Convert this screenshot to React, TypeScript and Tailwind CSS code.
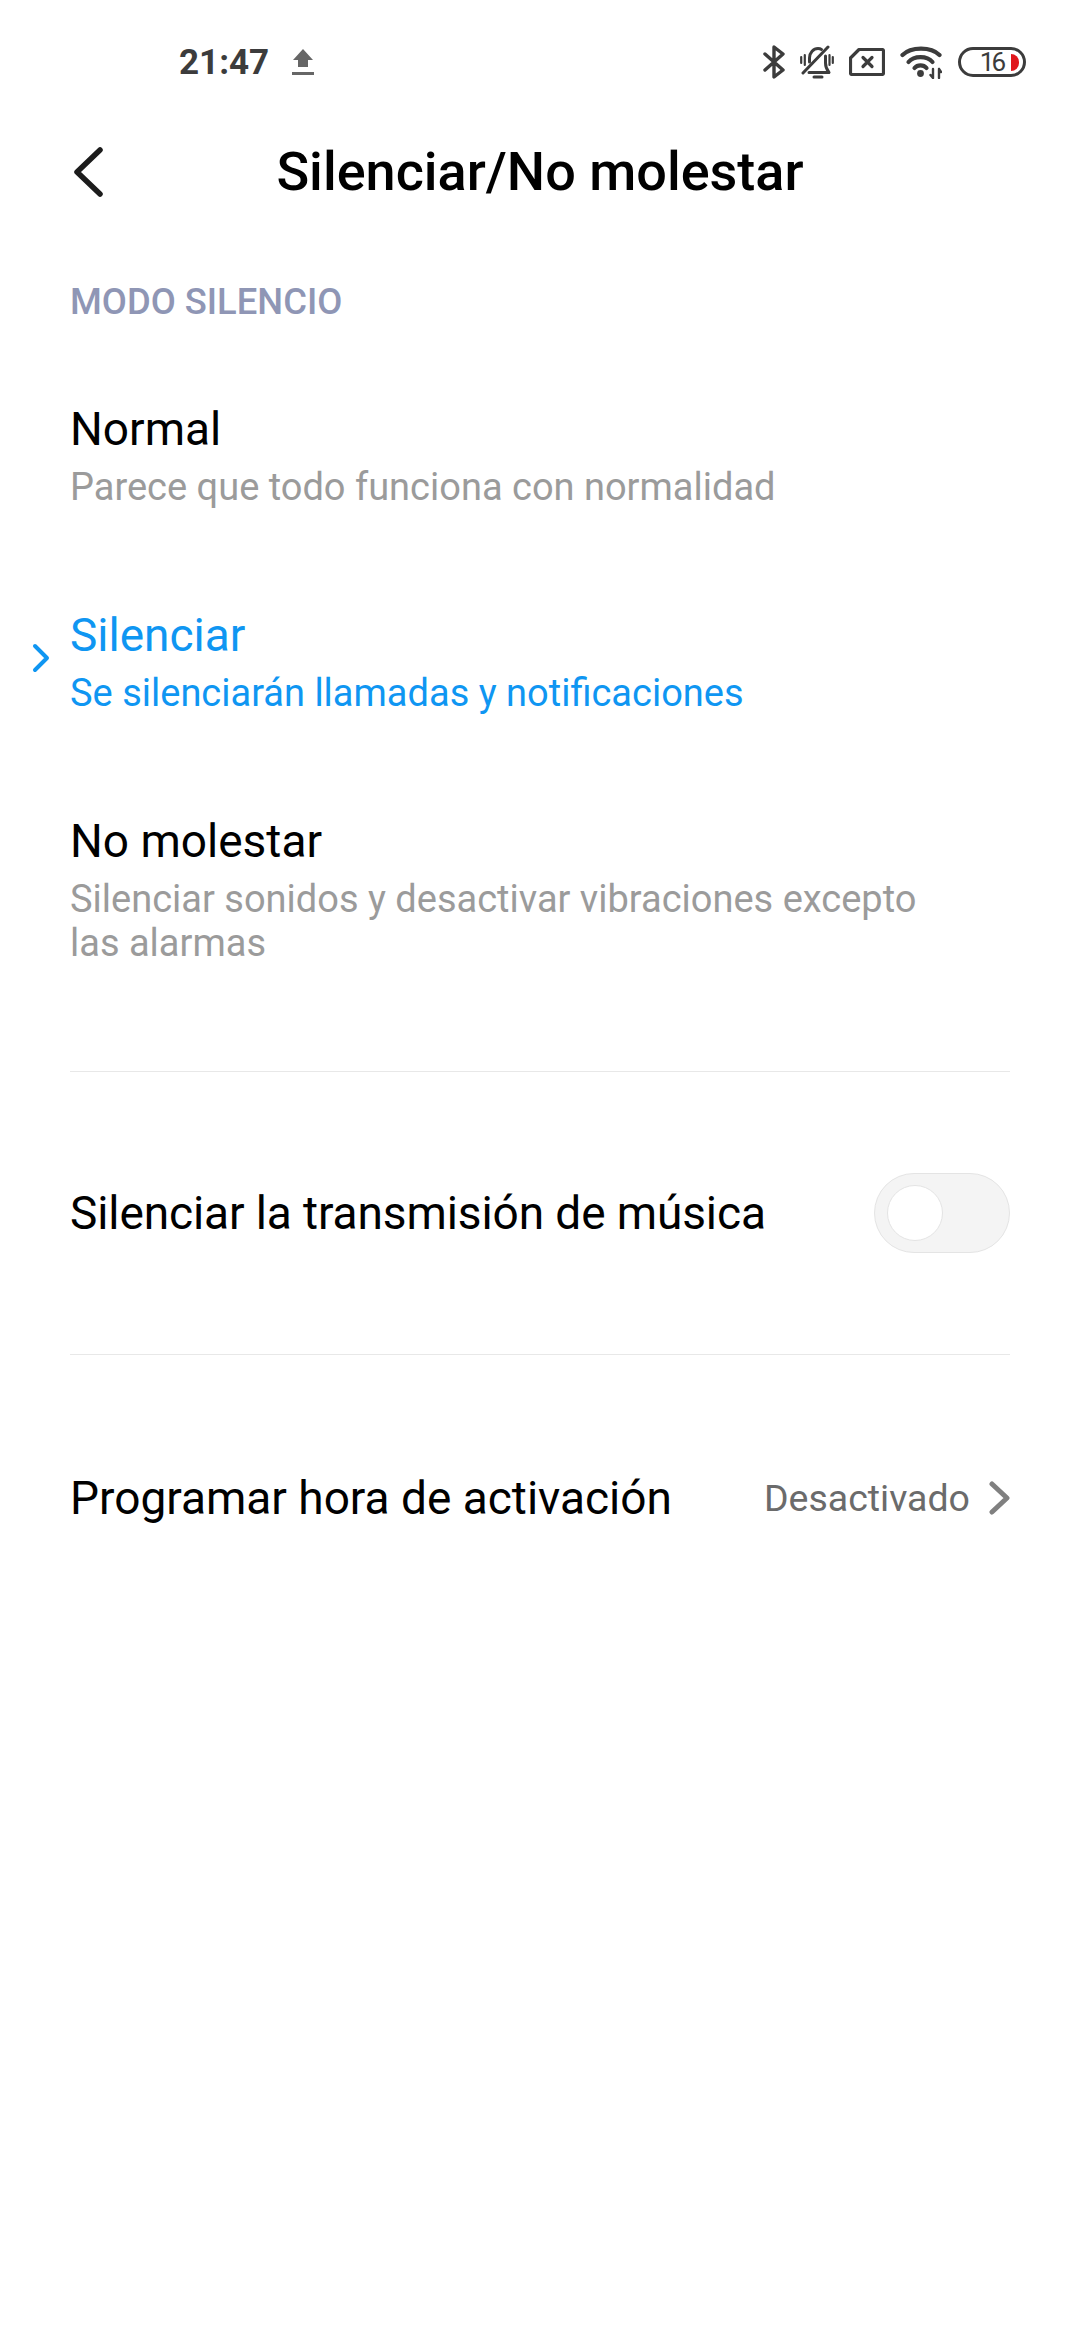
function StatusIcons() {
  return (
    <div className="flex items-center gap-[15px] text-[#3c3c3c]">
      {/* bluetooth */}
      <svg width="22" height="34" viewBox="0 0 22 34" fill="none" stroke="currentColor" strokeWidth="3.400" strokeLinecap="round" strokeLinejoin="round">
        <path d="M2 9 L20 25 L11 32 V2 L20 9 L2 25" />
      </svg>
      {/* muted bell */}
      <svg width="34" height="34" viewBox="0 0 34 34" fill="none" stroke="currentColor" strokeWidth="3" strokeLinecap="round" strokeLinejoin="round">
        <path d="M9.500 17 V13 C9.500 7.500 13.500 3.500 18 3.500 C19.500 3.500 20.500 3.800 21.500 4.500" />
        <path d="M25.500 11 V18 C25.500 22 27 25 29 27.500 H9" />
        <path d="M3 28 L28 2" />
        <path d="M14 32 H22" />
        <path d="M1.200 12 V18 M4.800 10 V20 M29.500 10 V20 M32.800 12 V18" strokeWidth="2.200" />
      </svg>
      {/* sim with x */}
      <svg width="36" height="28" viewBox="0 0 36 28" fill="none" stroke="currentColor" strokeWidth="3.200" strokeLinecap="round" strokeLinejoin="round">
        <path d="M10 1.500 H33 C34 1.500 34.500 2 34.500 3 V25 C34.500 26 34 26.500 33 26.500 H3 C2 26.500 1.500 26 1.500 25 V10 Z" />
        <path d="M14 9.500 L23 18.500 M23 9.500 L14 18.500" />
      </svg>
      {/* wifi */}
      <svg width="42" height="34" viewBox="0 0 42 34" fill="none" stroke="currentColor" strokeLinecap="round">
        <path d="M2.500 10 C11 1.500 31 1.500 39.500 10" strokeWidth="4.200" />
        <path d="M8.500 17 C14 10.500 27 10.500 32.500 17" strokeWidth="4.200" />
        <path d="M14.500 23 C17.500 19.500 23.500 19.500 26.500 23" strokeWidth="4.200" />
        <circle cx="20.500" cy="28.500" r="3.400" fill="currentColor" stroke="none" />
        <path d="M33 24 V33 M30.500 30 L33 33 M39 24 V33 M39 24 L41 27" strokeWidth="2.400" />
      </svg>
      {/* battery */}
      <div className="ml-[1px] flex h-[30px] w-[68px] items-center justify-end rounded-[15px] border-[3px] border-[#3c3c3c] pr-[4px]">
        <span className="mr-[8px] text-[26px] leading-none font-normal tracking-[-3px] text-[#3c3c3c]">16</span>
        <div className="h-[17px] w-[8px] rounded-r-[8px] bg-[#e0161c]" />
      </div>
    </div>
  )
}

function ModeRow({ title, desc, active }: { title: string; desc: string; active?: boolean }) {
  return (
    <div className="relative px-[70px]">
      {active && (
        <svg className="absolute left-[32px] top-[37px]" width="18" height="30" viewBox="0 0 18 30" fill="none" stroke="#0f96f2" strokeWidth="4" strokeLinecap="round" strokeLinejoin="round">
          <path d="M3 3 L15 15 L3 27" />
        </svg>
      )}
      <div className={`text-[46px] leading-[58px] ${active ? 'text-[#0f96f2]' : 'text-black'}`}>{title}</div>
      <div className={`mt-[7px] max-w-[880px] text-[38px] leading-[44px] ${active ? 'text-[#0f96f2]' : 'text-[#9b9b9b]'}`}>{desc}</div>
    </div>
  )
}

export default function App() {
  return (
    <div className="flex h-[2340px] w-[1080px] flex-col bg-white font-['Roboto',sans-serif]">
      {/* status bar */}
      <div className="flex h-[124px] items-center justify-between pl-[179px] pr-[54px]">
        <div className="flex items-center gap-[23px]">
          <span className="text-[35px] leading-none font-bold text-[#3c3c3c]">21:47</span>
          <svg width="22" height="26" viewBox="0 0 22 26" fill="#666666">
            <path d="M11 0 L21 11 H16 V18 H6 V11 H1 Z" />
            <rect x="0" y="23" width="22" height="3" />
          </svg>
        </div>
        <StatusIcons />
      </div>

      {/* title bar */}
      <div className="grid h-[96px] grid-cols-[1fr_auto_1fr] items-center">
        <svg className="ml-[73px]" width="30" height="50" viewBox="0 0 30 50" fill="none" stroke="#1c1c1c" strokeWidth="5.500" strokeLinecap="round" strokeLinejoin="round">
          <path d="M27 3 L4 25 L27 47" />
        </svg>
        <h1 className="text-[54px] leading-none font-medium text-black">Silenciar/No molestar</h1>
        <div />
      </div>

      <div className="mt-[61px] px-[70px] text-[36.4px] leading-[42px] font-medium text-[#8f96b5]">MODO SILENCIO</div>

      <div className="mt-[77px] flex flex-col gap-[97px]">
        <ModeRow title="Normal" desc="Parece que todo funciona con normalidad" />
        <ModeRow title="Silenciar" desc="Se silenciarán llamadas y notificaciones" active />
        <ModeRow title="No molestar" desc="Silenciar sonidos y desactivar vibraciones excepto las alarmas" />
      </div>

      <div className="mx-[70px] mt-[106px] border-t border-[#e8e8e8]" />

      <div className="flex h-[282px] items-center justify-between px-[70px]">
        <span className="text-[46px] tracking-[-0.1px] text-black">Silenciar la transmisión de música</span>
        <div className="flex h-[80px] w-[136px] items-center rounded-[40px] border border-[#e4e4e4] bg-[#f4f4f4] pl-[12px]">
          <div className="h-[56px] w-[56px] rounded-full border border-[#e4e4e4] bg-white" />
        </div>
      </div>

      <div className="mx-[70px] border-t border-[#e8e8e8]" />

      <div className="flex h-[286px] items-center justify-between px-[70px]">
        <span className="text-[46px] text-black">Programar hora de activación</span>
        <div className="flex items-center gap-[19px]">
          <span className="text-[37.5px] text-[#6b6b6b]">Desactivado</span>
          <svg width="21" height="34" viewBox="0 0 21 34" fill="none" stroke="#808080" strokeWidth="5" strokeLinecap="round" strokeLinejoin="round">
            <path d="M3 3 L18 17 L3 31" />
          </svg>
        </div>
      </div>
    </div>
  )
}
